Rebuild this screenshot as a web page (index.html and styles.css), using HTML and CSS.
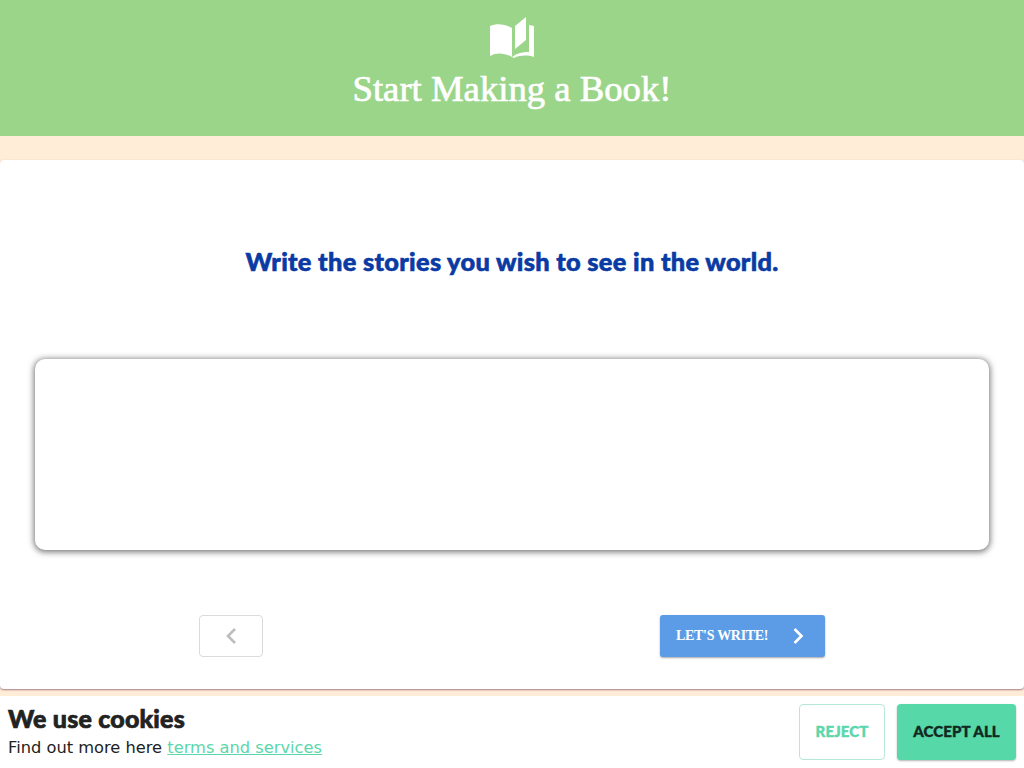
FILE: index.html
```html
<!DOCTYPE html>
<html lang="en">
<head>
<meta charset="utf-8">
<title>Start Making a Book!</title>
<link rel="stylesheet" href="styles.css">
</head>
<body>
<header class="hero">
  <svg class="hero-icon" viewBox="490 17 44 41" width="44" height="41" aria-hidden="true">
    <path fill="#fff" d="M490 26C497 23 505 24 512 28V57C505 53 497 52 490 56Z"/>
    <path fill="#fff" d="M515 26 526 17V40L515 49Z"/>
    <path fill="#fff" d="M512 57C517 53 523 52 529 52V25L534 26V57C528 55 520 55 514 58Z"/>
  </svg>
  <h1 class="hero-title">Start Making a Book!</h1>
</header>
<main class="card">
  <h2 class="tagline">Write the stories you wish to see in the world.</h2>
  <div class="editor"></div>
  <div class="nav">
    <button class="btn-back" type="button" aria-label="Back">
      <svg viewBox="0 0 12 18" width="12" height="18"><path d="M10 2 3 9l7 7" fill="none" stroke="#bdbdbd" stroke-width="2.600"/></svg>
    </button>
    <button class="btn-next" type="button">
      <span>LET'S WRITE!</span>
      <svg viewBox="0 0 12 18" width="12" height="18"><path d="M2.500 2l7 7-7 7" fill="none" stroke="#fff" stroke-width="2.600"/></svg>
    </button>
  </div>
</main>
<footer class="cookies">
  <div class="cookies-text">
    <div class="cookies-title">We use cookies</div>
    <div class="cookies-note">Find out more here <a href="#">terms and services</a></div>
  </div>
  <div class="cookies-actions">
    <button class="btn-reject" type="button">REJECT</button>
    <button class="btn-accept" type="button">ACCEPT ALL</button>
  </div>
</footer>
</body>
</html>
```
FILE: styles.css
```css
* { box-sizing: border-box; }
html, body { margin: 0; height: 100%; }
body {
  width: 1024px;
  height: 768px;
  overflow: hidden;
  background: #ffedd8;
  font-family: "DejaVu Sans", sans-serif;
  display: flex;
  flex-direction: column;
}
.hero {
  height: 136px;
  flex: none;
  background: #9bd58a;
  display: flex;
  flex-direction: column;
  align-items: center;
  padding-top: 17px;
}
.hero-icon { display: block; }
.hero-title {
  margin: 9px 0 0;
  font-family: "Liberation Serif", serif;
  font-size: 36.7px;
  line-height: 44px;
  font-weight: 400;
  color: #fff;
  -webkit-text-stroke: 0.7px #fff;
}
.card {
  margin-top: 24px;
  height: 529px;
  flex: none;
  background: #fff;
  border-radius: 4px;
  box-shadow: 0 1px 2px rgba(90, 30, 60, .55);
  display: flex;
  flex-direction: column;
  align-items: center;
  padding: 84px 35px 0;
}
.tagline {
  margin: 0;
  font-family: Lato, sans-serif;
  font-weight: 900;
  font-size: 25.4px;
  letter-spacing: .3px;
  line-height: 35px;
  color: #0a3aa3;
  -webkit-text-stroke: 0.6px #0a3aa3;
}
.editor {
  margin-top: 80px;
  width: 954px;
  height: 191px;
  background: #fff;
  border-radius: 10px;
  box-shadow: 0 1px 6px 1px rgba(0, 0, 0, .55);
}
.nav {
  margin-top: 65px;
  width: 626px;
  display: flex;
  justify-content: space-between;
  align-self: center;
}
button { font: inherit; cursor: pointer; }
.btn-back {
  width: 64px;
  height: 42px;
  background: #fff;
  border: 1px solid #dbdbdb;
  border-radius: 4px;
  padding: 0;
  display: flex;
  align-items: center;
  justify-content: center;
}
.btn-next {
  width: 165px;
  height: 42px;
  background: #5c9ce6;
  border: 0;
  border-radius: 3px;
  box-shadow: 0 1px 2px rgba(0, 0, 0, .35);
  color: #fff;
  font-family: "Liberation Serif", serif;
  font-weight: 700;
  font-size: 14px;
  letter-spacing: -.3px;
  padding: 0 21px 0 16px;
  display: flex;
  align-items: center;
  justify-content: space-between;
}
.cookies {
  margin-top: 7px;
  flex: 1;
  background: #fff;
  padding: 8px;
  display: flex;
  justify-content: space-between;
  align-items: stretch;
}
.cookies-title {
  font-family: Lato, sans-serif;
  font-weight: 900;
  font-size: 25px;
  letter-spacing: .2px;
  line-height: 28px;
  color: #222;
  -webkit-text-stroke: 0.7px #222;
}
.cookies-note {
  font-size: 16.25px;
  line-height: 24px;
  color: #222;
  margin-top: 4px;
}
.cookies-note a { color: #5cd6ab; }
.cookies-actions { display: flex; gap: 12px; }
.btn-reject, .btn-accept {
  height: 56px;
  font-family: Lato, sans-serif;
  font-weight: 900;
  font-size: 15px;
  border-radius: 4px;
  padding: 0 0 2px;
  letter-spacing: .1px;
}
.btn-reject {
  width: 86px;
  background: #fff;
  border: 1px solid #b5e8d5;
  color: #5cd6ab;
  -webkit-text-stroke: 0.4px #5cd6ab;
}
.btn-accept {
  width: 119px;
  background: #56d8a9;
  border: 0;
  box-shadow: 0 1px 2px rgba(0, 0, 0, .3);
  color: #12291f;
  -webkit-text-stroke: 0.4px #12291f;
}
```
